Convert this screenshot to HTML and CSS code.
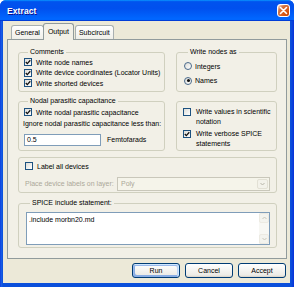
FILE: index.html
```html
<!DOCTYPE html>
<html>
<head>
<meta charset="utf-8">
<link rel="stylesheet" href="styles.css">
</head>
<body>
<div class="window">
  <div class="titlebar">
    <span class="title">Extract</span>
    <span class="close"><svg width="9" height="9" viewBox="0 0 9 9"><path d="M1.5 1.5 L7.5 7.5 M7.5 1.5 L1.5 7.5" stroke="#fff" stroke-width="1.6" stroke-linecap="round"/></svg></span>
  </div>
  <div class="body">
    <div class="tabs">
      <div class="tab">General</div>
      <div class="tab active">Output</div>
      <div class="tab">Subcircuit</div>
    </div>
    <div class="panel">
      <div class="row row1">
        <div class="group g-comments">
          <div class="legend">Comments</div>
          <div class="check"><span class="box"><svg viewBox="0 0 6 6"><path d="M0.8 3 L2.3 4.6 L5.3 1.2" /></svg></span>Write node names</div>
          <div class="check"><span class="box"><svg viewBox="0 0 6 6"><path d="M0.8 3 L2.3 4.6 L5.3 1.2" /></svg></span>Write device coordinates (Locator Units)</div>
          <div class="check"><span class="box"><svg viewBox="0 0 6 6"><path d="M0.8 3 L2.3 4.6 L5.3 1.2" /></svg></span>Write shorted devices</div>
        </div>
        <div class="group g-nodes">
          <div class="legend">Write nodes as</div>
          <div class="radio-row"><span class="radio"></span>Integers</div>
          <div class="radio-row"><span class="radio on"></span>Names</div>
        </div>
      </div>
      <div class="row row2">
        <div class="group g-nodal">
          <div class="legend">Nodal parasitic capacitance</div>
          <div class="check"><span class="box"><svg viewBox="0 0 6 6"><path d="M0.8 3 L2.3 4.6 L5.3 1.2" /></svg></span>Write nodal parasitic capacitance</div>
          <div class="ignore">Ignore nodal parasitic capacitance less than:</div>
          <div class="input-row"><span class="input">0.5</span><span>Femtofarads</span></div>
        </div>
        <div class="group g-sci">
          <div class="check multi"><span class="box empty"></span><span>Write values in scientific<br>notation</span></div>
          <div class="check multi second"><span class="box"><svg viewBox="0 0 6 6"><path d="M0.8 3 L2.3 4.6 L5.3 1.2" /></svg></span><span>Write verbose SPICE<br>statements</span></div>
        </div>
      </div>
      <div class="row row3">
        <div class="group g-label">
          <div class="check"><span class="box empty"></span>Label all devices</div>
          <div class="place-row">
            <span class="disabled-text">Place device labels on layer:</span>
            <span class="select"><span class="select-text">Poly</span><span class="select-btn"><svg width="5" height="4" viewBox="0 0 5 4"><path d="M0.5 1 L2.5 3 L4.5 1" stroke="#b7b5a8" stroke-width="1" fill="none"/></svg></span></span>
          </div>
        </div>
      </div>
      <div class="row row4">
        <div class="group g-spice">
          <div class="legend">SPICE include statement:</div>
          <div class="textarea">
            <div class="textarea-text">.include morbn20.md</div>
            <div class="scrollbar">
              <span class="sb-btn"><svg width="5" height="4" viewBox="0 0 5 4"><path d="M0.5 3 L2.5 1 L4.5 3" stroke="#c9c7bb" stroke-width="1" fill="none"/></svg></span>
              <span class="sb-track"></span>
              <span class="sb-btn"><svg width="5" height="4" viewBox="0 0 5 4"><path d="M0.5 1 L2.5 3 L4.5 1" stroke="#c9c7bb" stroke-width="1" fill="none"/></svg></span>
            </div>
          </div>
        </div>
      </div>
    </div>
    <div class="buttons">
      <div class="btn default">Run</div>
      <div class="btn">Cancel</div>
      <div class="btn">Accept</div>
    </div>
  </div>
</div>
</body>
</html>
```
FILE: styles.css
```css
* { box-sizing: border-box; }
html, body { margin: 0; padding: 0; }
body {
  width: 294px;
  height: 287px;
  overflow: hidden;
  font-family: "Liberation Sans", Arial, sans-serif;
  font-size: 7px;
  color: #000;
  background: #fff;
}
.window {
  width: 294px;
  height: 287px;
  display: flex;
  flex-direction: column;
  background: linear-gradient(90deg, #0831d9 0, #1a5fe8 1px, #0a4fdb 3px, #0a4fdb calc(100% - 3px), #0831d9 100%);
  border-radius: 6px 6px 0 0;
  overflow: hidden;
}
.titlebar {
  height: 21px;
  flex: none;
  display: flex;
  align-items: center;
  padding: 0 4px 0 7px;
  background: linear-gradient(180deg, #0997ff, #0053ee 8%, #0050ee 40%, #0066ff 88%, #0066ff 93%, #005bff 95%, #003dd7 96%, #003dd7);
}
.title {
  color: #fff;
  font-weight: bold;
  font-size: 8.5px;
  text-shadow: 1px 1px #0f1089;
  letter-spacing: 0.1px;
}
.close {
  margin-left: auto;
  width: 13px;
  height: 13px;
  border: 1px solid #fff;
  border-radius: 3px;
  display: flex;
  align-items: center;
  justify-content: center;
  background: radial-gradient(circle at 90% 90%, #cc4600 0, #dc6527 55%, #cd7546 70%, #ffccb2 90%, #fff 100%);
}
.body {
  flex: 1;
  margin: 0 4px 4px 3px;
  background: #ece9d8;
  padding: 2px 3px 0 4px;
  display: flex;
  flex-direction: column;
}
.tabs {
  height: 16px;
  display: flex;
  align-items: flex-end;
  padding-left: 4px;
}
.tab {
  height: 14px;
  padding: 0 3px;
  line-height: 13px;
  border: 1px solid #a9b0b1;
  border-bottom: none;
  border-radius: 3px 3px 0 0;
  background: linear-gradient(180deg, #fff, #fafaf9 26%, #f0f0ea 95%, #ecebe5);
  margin-right: 1px;
}
.tab.active {
  height: 17px;
  margin: 0 -1px -1px -2px;
  padding: 0 4px;
  line-height: 15px;
  background: #f2f0e7;
  position: relative;
  z-index: 1;
  border-color: #919b9c;
}
.tab.active + .tab { margin-left: 2px; }
.panel {
  height: 220px;
  flex: none;
  border: 1px solid #919b9c;
  background: #f2f0e7;
  padding: 12px 9px 0 10px;
  display: flex;
  flex-direction: column;
}
.row { display: flex; gap: 11px; }
.row1 { height: 40px; }
.row2 { height: 50px; margin-top: 9px; }
.row3 { height: 36px; margin-top: 6px; }
.row4 { height: 45px; margin-top: 10px; }
.group {
  border: 1px solid #d0d0bf;
  border-radius: 3px;
}
.g-comments, .g-nodal { width: 147px; }
.g-nodes, .g-sci { width: 101px; }
.g-label, .g-spice { width: 259px; }
.legend {
  display: table;
  margin: -6px 0 0 4px;
  padding: 0 2px;
  line-height: 10px;
  background: #f2f0e7;
}
.check {
  display: flex;
  align-items: center;
  height: 10.5px;
  gap: 4px;
  white-space: nowrap;
}
.box {
  width: 8px;
  height: 8px;
  flex: none;
  border: 1px solid #1c5180;
  background: linear-gradient(135deg, #dcdcd7, #fff);
  display: flex;
}
.box svg {
  width: 6px;
  height: 6px;
  fill: none;
  stroke: #111;
  stroke-width: 1.3;
}
.g-comments { padding: 0 3px 0 5px; }
.g-nodes { padding: 0 3px 0 7px; }
.radio-row {
  display: flex;
  align-items: center;
  height: 10.5px;
  gap: 3px;
  margin-top: 4px;
}
.radio {
  width: 8px;
  height: 8px;
  border-radius: 50%;
  border: 1px solid #4a6a8c;
  background: linear-gradient(135deg, #dcdcd7, #fff);
  display: flex;
  align-items: center;
  justify-content: center;
}
.radio.on::after {
  content: "";
  width: 3px;
  height: 3px;
  border-radius: 50%;
  background: #111;
}
.g-nodal { padding: 0 3px 0 5px; }
.g-nodal .check { margin-top: 1px; }
.ignore {
  margin: 1.5px 0 0 -1px;
  line-height: 10.5px;
  white-space: nowrap;
}
.input-row {
  display: flex;
  align-items: center;
  gap: 6px;
  margin-top: 4px;
}
.input {
  width: 77px;
  height: 12px;
  border: 1px solid #7f9db9;
  background: #fff;
  padding-left: 2px;
  line-height: 10px;
}
.g-sci { padding: 5px 3px 0 6px; }
.check.multi {
  height: auto;
  align-items: flex-start;
  line-height: 10px;
  gap: 5px;
}
.check.multi .box { margin-top: 1px; }
.check.multi.second { margin-top: 2px; }
.g-label { padding: 3px 6px 0 6px; }
.place-row {
  display: flex;
  align-items: center;
  margin-top: 5px;
  height: 14px;
}
.disabled-text { color: #aca899; white-space: nowrap; }
.select {
  margin-left: auto;
  width: 153px;
  height: 14px;
  border: 1px solid #c9c7ba;
  background: #f5f4ea;
  display: flex;
  align-items: center;
  padding: 1px;
}
.select-text { color: #aca899; padding-left: 2px; flex: 1; }
.select-btn {
  width: 11px;
  height: 100%;
  border: 1px solid #e2e0d4;
  border-radius: 2px;
  background: #f3f2ea;
  display: flex;
  align-items: center;
  justify-content: center;
}
.g-spice { padding: 0 6px 0 7px; }
.textarea {
  margin-top: 4px;
  height: 33px;
  border: 1px solid #7f9db9;
  background: #fff;
  display: flex;
}
.textarea-text {
  flex: 1;
  padding: 2px 2px 0 2px;
  line-height: 10px;
}
.scrollbar {
  width: 10px;
  display: flex;
  flex-direction: column;
  background: #f7f7f3;
}
.sb-btn {
  height: 10px;
  border: 1px solid #eceae2;
  border-radius: 2px;
  background: #f3f3ee;
  display: flex;
  align-items: center;
  justify-content: center;
}
.sb-track { flex: 1; }
.buttons {
  display: flex;
  justify-content: flex-end;
  gap: 5px;
  margin-top: 4px;
  padding-right: 1px;
}
.btn {
  width: 48px;
  height: 15px;
  border: 1px solid #003c74;
  border-radius: 3px;
  background: linear-gradient(180deg, #fff, #ecebe6 86%, #d6d0c5);
  display: flex;
  align-items: center;
  justify-content: center;
}
.btn.default {
  box-shadow: inset -1px 1px #cee7ff, inset 1px 2px #98b8ea, inset -2px 2px #bcd4f6, inset 1px -1px #89ade4, inset 2px -2px #89ade4;
}
```
